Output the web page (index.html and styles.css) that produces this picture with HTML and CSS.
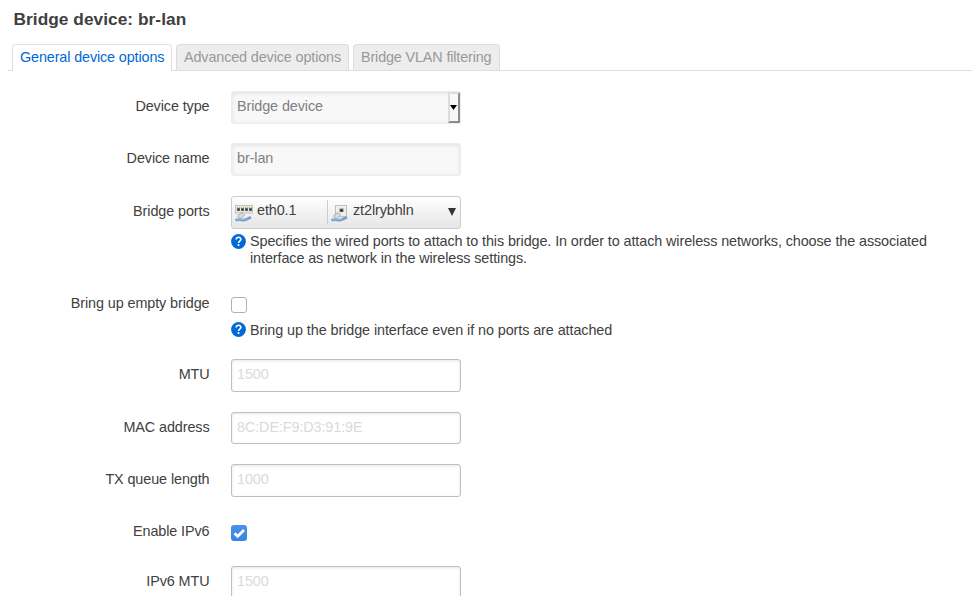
FILE: index.html
```html
<!DOCTYPE html>
<html lang="en">
<head>
<meta charset="utf-8">
<title>Bridge device: br-lan</title>
<link rel="stylesheet" href="styles.css">
</head>
<body>
<svg width="0" height="0" class="defs">
  <symbol id="cable" viewBox="0 0 18 18">
    <path d="M3 11.500 7 8.500 9.500 11 6 14.500 3.500 13.500Z" fill="#deded9" stroke="#999" stroke-width=".8"/>
    <path d="M.5 16.300C5 14.200 7.500 17.300 11 15.500L16 13.300" fill="none" stroke="#7a9fd0" stroke-width="2.800"/>
    <path d="M2 15.700C5 14.300 8 16 11 14.700" fill="none" stroke="#a8c5ea" stroke-width=".8"/>
  </symbol>
  <symbol id="help" viewBox="0 0 15 15">
    <circle cx="7.500" cy="7.500" r="7.400" fill="#0069d6"/>
    <path d="M5.100 5.500C5.300 2.500 10 2.600 9.900 5.300 9.800 7.100 7.600 7.100 7.500 9" fill="none" stroke="#fff" stroke-width="1.600"/>
    <rect x="6.600" y="10.100" width="1.800" height="1.800" fill="#fff"/>
  </symbol>
</svg>
<h4>Bridge device: br-lan</h4>
<ul class="tabs">
  <li class="active">General device options</li>
  <li>Advanced device options</li>
  <li>Bridge VLAN filtering</li>
</ul>
<main>
  <div class="row type-row"><label>Device type</label><div class="input disabled select"><span>Bridge device</span><i><svg width="7" height="5" viewBox="0 0 7 5"><path d="M0 0H7L3.500 5Z"/></svg></i></div></div>
  <div class="row name-row"><label>Device name</label><div class="input disabled">br-lan</div></div>
  <div class="row ports-row"><label>Bridge ports</label>
    <div>
      <div class="ports">
        <span class="port first"><svg width="18" height="18" viewBox="0 0 18 18"><rect x=".5" y="1.500" width="17" height="7.500" fill="#e6e6e1" stroke="#c4c4c0"/><path d="M2 4h3v3H2zM6 4h3v3H6zM10 4h3v3h-3zM14 4h3v3h-3z" fill="#66665e"/><path d="M3 5h1v1H3zM7 5h1v1H7zM11 5h1v1h-1zM15 5h1v1h-1z" fill="#222"/><path d="M2 3.500h1m1 0h1m1 0h1m1 0h1m1 0h1m1 0h1m1 0h1m1 0h1" stroke="#c8b665"/><use href="#cable"/></svg>eth0.1</span>
        <span class="port"><svg width="18" height="18" viewBox="0 0 18 18"><rect x="4.500" y="1.500" width="11" height="11" fill="#eeeeeb" stroke="#c0c0bb"/><path d="M8.500 4.500h4v3.500h-4z" fill="#77776c"/><path d="M9.500 5.500h2v2h-2z" fill="#222"/><path d="M9 4.500h1m1 0h1" stroke="#c8b665"/><use href="#cable"/></svg>zt2lrybhln</span>
        <svg class="arrow" width="8" height="8" viewBox="0 0 8 8"><path d="M0 0H8L4 8Z" fill="#333"/></svg>
      </div>
      <p class="hint"><svg width="15" height="15"><use href="#help"/></svg><span>Specifies the wired ports to attach to this bridge. In order to attach wireless networks, choose the associated<br>interface as network in the wireless settings.</span></p>
    </div>
  </div>
  <div class="row empty-row"><label>Bring up empty bridge</label>
    <div><span class="check"></span><p class="hint"><svg width="15" height="15"><use href="#help"/></svg><span>Bring up the bridge interface even if no ports are attached</span></p></div>
  </div>
  <div class="row"><label>MTU</label><div class="input">1500</div></div>
  <div class="row"><label>MAC address</label><div class="input">8C:DE:F9:D3:91:9E</div></div>
  <div class="row"><label>TX queue length</label><div class="input">1000</div></div>
  <div class="row ipv6-row"><label>Enable IPv6</label><span class="check checked"><svg width="16" height="16" viewBox="0 0 16 16"><path d="M3.500 8.300 6.700 11.300 13 5" fill="none" stroke="#fff" stroke-width="2.700"/></svg></span></div>
  <div class="row"><label>IPv6 MTU</label><div class="input">1500</div></div>
</main>
</body>
</html>
```
FILE: styles.css
```css
* { box-sizing: border-box; }
html { overflow: hidden; }
body { margin: 0; height: 596px; overflow: hidden; background: #fff; color: #404040; font: 14.4px/17px "Liberation Sans", Arial, sans-serif; letter-spacing: -.1px; }
.defs { display: block; height: 0; }
h4 { margin: 0; padding: 9px 0 0 13.5px; height: 44px; font-size: 17.3px; line-height: 20px; letter-spacing: .04px; }
.tabs { display: flex; gap: 4px; list-style: none; margin: 0 3px 0 8px; padding: 0 4px; height: 27px; border-bottom: 1px solid #ddd; letter-spacing: -.13px; }
.tabs li { width: 173px; height: 26px; padding: 4px 0 0 7px; border: 1px solid #ddd; border-bottom: 0; border-radius: 4px 4px 0 0; background: #ededed; color: #999; white-space: nowrap; }
.tabs .active { width: 160px; height: 27px; background: #fff; color: #0069d6; }
.tabs li:last-child { width: 147px; letter-spacing: -.15px; }
main { padding-top: 20px; }
.row { display: grid; grid-template-columns: 209.5px 1fr; column-gap: 21.5px; align-items: start; height: 52.5px; }
.type-row { height: 52px; }
.name-row { height: 53px; }
label { text-align: right; padding-top: 7px; white-space: nowrap; }
.input, .ports { width: 230px; height: 32.5px; border: 1px solid #bfbfbf; border-radius: 3px; padding: 6px 5px; color: #dadada; box-shadow: inset 0 1px 3px rgba(0,0,0,.1); white-space: nowrap; }
.disabled { color: #808080; background: #f8f8f8; border-color: #ececec; box-shadow: inset 0 1px 4px rgba(0,0,0,.1); }
.select { display: flex; justify-content: space-between; padding: 0 0 0 5px; }
.select span { padding-top: 6px; }
.select i { display: flex; align-items: center; justify-content: center; width: 12px; background: #f8f8f8; border: 2px solid; border-color: #ddd #8c8c8c #8c8c8c #ddd; }
.select i svg { flex: none; margin-right: 2px; }
.ports-row { height: 101px; }
.ports { display: flex; padding: 0 4px 0 0; color: #404040; border-color: #ccc; background: linear-gradient(#fff, #e6e6e6); box-shadow: none; }
.port { display: flex; gap: 4px; padding: 2px 0 0 3px; height: 24px; margin-top: 3px; line-height: 17px; }
.port svg { margin-top: 2px; }
.first { width: 96px; border-right: 1px solid #ccc; }
.arrow { margin: 11px 0 0 auto; }
.hint { display: flex; gap: 4px; margin: 4px 0 0; white-space: nowrap; }
.hint svg { flex: none; margin-top: 1px; }
.empty-row { height: 62px; }
.empty-row label { padding-top: 0; margin-top: -2px; }
.empty-row .hint { margin-top: 9px; letter-spacing: -.085px; }
.empty-row .hint svg { margin-top: 0; }
.check { display: block; width: 16px; height: 16px; border: 1px solid #b6b0aa; border-radius: 3px; background: #fff; }
.checked { border: 0; background: linear-gradient(#4a92e8, #3584e4); }
.checked svg { display: block; }
.ipv6-row { height: 49.5px; }
.ipv6-row label { padding-top: 6px; }
.ipv6-row .check { margin-top: 8.500px; }
```
